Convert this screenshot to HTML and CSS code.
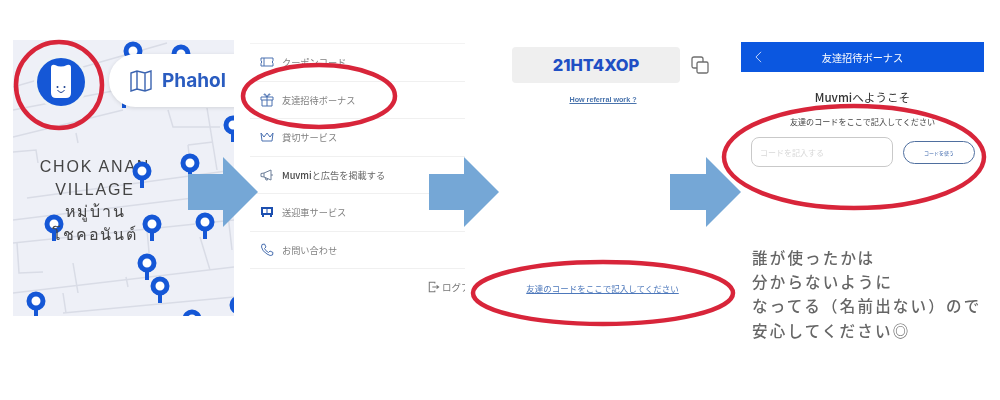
FILE: index.html
```html
<!DOCTYPE html>
<html lang="ja">
<head>
    <meta charset="UTF-8">
    <title>友達招待ボーナス</title>
    <link rel="stylesheet" href="styles.css">
</head>
<body>
    <div class="stage">
        <!-- 地図 -->
        <div class="panel map-panel">
            <svg class="map-svg" viewBox="13 40 221 276" width="221" height="276">
                <defs>
                    <g id="pin">
                        <rect x="-2" y="5" width="4" height="12" fill="#1557d6"/>
                        <circle r="7" fill="#fff" stroke="#1557d6" stroke-width="5"/>
                    </g>
                </defs>
                <g class="road">
                    <path d="M13 87L167 43M13 110L118 90M13 137L123 110M27 198L234 170M13 220L234 193M13 243L234 220M13 293L234 267M63 313L234 297"/>
                    <path d="M207 108L217 170M200 237L210 270M147 230L150 263M17 243L19 273L43 272M73 263L78 293M63 293L66 313M126 277L128 287M228 215L232 250"/>
                    <path d="M188 145L213 142M188 145L190 163M168 110L173 127L220 127M76 133L78 143M13 152L36 150L38 163"/>
                </g>
                <use href="#pin" x="133" y="51"/>
                <use href="#pin" x="181" y="54"/>
                <use href="#pin" x="124" y="91"/>
                <use href="#pin" x="233" y="125"/>
                <use href="#pin" x="190" y="163"/>
                <use href="#pin" x="54" y="224"/>
                <use href="#pin" x="205" y="222"/>
                <use href="#pin" x="147" y="263"/>
                <use href="#pin" x="160" y="286"/>
                <use href="#pin" x="36" y="301"/>
                <use href="#pin" x="192" y="319"/>
                <use href="#pin" x="239" y="305"/>
            </svg>
            <div class="map-label">
                <div>CHOK ANAN</div>
                <div>VILLAGE</div>
                <div>หมู่บ้าน</div>
                <div>โชคอนันต์</div>
            </div>
            <svg class="map-svg" viewBox="13 40 221 276" width="221" height="276">
                <use href="#pin" x="142" y="171"/>
                <use href="#pin" x="152" y="224"/>
            </svg>
            <div class="logo-btn">
                <svg viewBox="0 0 50 50" width="50" height="50">
                    <circle cx="25" cy="25" r="24" fill="#1557d6"/>
                    <path d="M15 11Q15 7 19 8Q22 9.5 25 9.5Q28 9.5 31 8Q35 7 35 11L35 36Q35 41 30 41L20 41Q15 41 15 36Z" fill="#fff"/>
                    <circle cx="21.5" cy="30" r="1" fill="#1b3f8f"/>
                    <circle cx="28.5" cy="30" r="1" fill="#1b3f8f"/>
                    <path d="M21.5 33Q25 38 28.5 33" fill="none" stroke="#1b3f8f" stroke-width="1"/>
                </svg>
            </div>
            <div class="place-pill">
                <svg viewBox="0 0 24 24" width="24" height="24" fill="none" stroke="#3a63b0" stroke-width="1.4">
                    <path d="M2 4L8 2L16 4L22 2V20L16 22L8 20L2 22ZM8 2V20M16 4V22"/>
                </svg>
                <span class="place-name">Phahol</span>
                <span class="place-dot">·</span>
            </div>
        </div>

        <!-- メニュー -->
        <div class="panel menu-panel">
            <div class="menu-row">
                <svg class="menu-icon" viewBox="0 0 14 14"><path d="M1 3H13V5.5Q11.5 7 13 8.5V11H1V8.5Q2.5 7 1 5.5ZM4 3V11"/></svg>
                <span>クーポンコード</span>
            </div>
            <div class="menu-row">
                <svg class="menu-icon" viewBox="0 0 14 14"><path d="M1 4H13V7H1ZM2 7V13H12V7M7 4V13M7 4Q3 1 4 1Q5.5 0 7 4Q8.5 0 10 1Q11 1 7 4"/></svg>
                <span>友達招待ボーナス</span>
            </div>
            <div class="menu-row">
                <svg class="menu-icon" viewBox="0 0 14 14"><path d="M1 3L4 7L7 3L10 7L13 3L12 11H2Z"/></svg>
                <span>貸切サービス</span>
            </div>
            <div class="menu-row">
                <svg class="menu-icon grey" viewBox="0 0 14 14"><path d="M1 5.5V8.5L4 9V5ZM4 5L11 2V12L4 9M5 9.5L6 12H7.5L7 10M11 7H13"/></svg>
                <span class="dark-part"><b>Muvmi</b>と広告を掲載する</span>
            </div>
            <div class="menu-row">
                <svg class="menu-icon solid" viewBox="0 0 14 14"><path d="M1 2H13V10H12V12H10V10H4V12H2V10H1ZM3 4V8H6.5V4ZM7.5 4V8H11V4Z"/></svg>
                <span>送迎車サービス</span>
            </div>
            <div class="menu-row">
                <svg class="menu-icon" viewBox="0 0 14 14"><path d="M2 1.5L4.5 1L6 4L4.5 5.5Q5.5 8 8.5 9.5L10 8L13 9.5L12.5 12Q10.5 13.5 7 11Q2 8 1.5 4Z"/></svg>
                <span>お問い合わせ</span>
            </div>
            <div class="logout-row">
                <svg class="logout-icon" viewBox="0 0 14 14"><path d="M8 3V1.5H1.5V12.5H8V11M5 7H12M10 5L12.5 7L10 9"/></svg>
                <span>ログアウト</span>
            </div>
        </div>

        <!-- 招待コード -->
        <div class="panel code-panel">
            <div class="code-row">
                <div class="code-box">21HT4XOP</div>
                <svg class="copy-icon" viewBox="0 0 18 18"><rect x="6" y="6" width="11" height="11" rx="1.5"/><path d="M6 12H3Q1 12 1 10V3Q1 1 3 1H10Q12 1 12 3V6"/></svg>
            </div>
            <a class="how-link" href="#">How referral work ?</a>
            <a class="enter-link" href="#">友達のコードをここで記入してください</a>
        </div>

        <!-- コード入力 -->
        <div class="panel enter-panel">
            <div class="enter-header">
                <svg class="back-icon" viewBox="0 0 8 14"><path d="M7 1L1 7L7 13"/></svg>
                <span>友達招待ボーナス</span>
            </div>
            <div class="welcome"><b>Muvmi</b>へようこそ</div>
            <div class="enter-sub">友達のコードをここで記入してください</div>
            <div class="enter-form">
                <div class="code-input">コードを記入する</div>
                <div class="use-btn">コードを使う</div>
            </div>
        </div>

        <p class="note">誰が使ったかは<br>分からないように<br>なってる（名前出ない）ので<br>安心してください◎</p>

        <!-- 矢印と赤丸 -->
        <svg class="overlay" viewBox="0 0 1000 400" width="1000" height="400">
            <path class="arrow" d="M188 174H223V157L258 192L223 227V210H188Z"/>
            <path class="arrow" d="M429 174H464V157L499 192L464 227V210H429Z"/>
            <path class="arrow" d="M670 174H706V157L741 192L706 227V210H670Z"/>
            <ellipse class="ring" cx="59" cy="85" rx="43" ry="43"/>
            <ellipse class="ring" cx="319" cy="96" rx="76" ry="31"/>
            <ellipse class="ring" cx="603" cy="293" rx="130" ry="31"/>
            <ellipse class="ring" cx="854" cy="157" rx="130" ry="51"/>
        </svg>
    </div>
</body>
</html>
```

FILE: styles.css
```css
* {
    box-sizing: border-box;
}

body {
    margin: 0;
    background: #fff;
    font-family: "Noto Sans CJK JP", "Noto Sans", sans-serif;
    overflow: hidden;
}

.stage {
    position: relative;
    width: 1000px;
    height: 400px;
    overflow: hidden;
}

.panel {
    position: absolute;
    overflow: hidden;
    filter: blur(0.35px);
}

/* 地図 */
.map-panel {
    left: 13px;
    top: 40px;
    width: 221px;
    height: 276px;
    background: #eef0f7;
}

.map-svg {
    position: absolute;
    left: 0;
    top: 0;
}

.road path {
    fill: none;
    stroke: #d9dce6;
    stroke-width: 1.5;
}

.map-label {
    position: absolute;
    left: 0;
    top: 116px;
    width: 164px;
    text-align: center;
    font-family: "Liberation Sans", "Noto Sans", sans-serif;
    font-size: 16px;
    line-height: 22.5px;
    letter-spacing: 1.8px;
    color: #444;
}

.logo-btn {
    position: absolute;
    left: 21px;
    top: 15px;
    width: 54px;
    height: 54px;
    border-radius: 50%;
    background: #eef2f5;
    display: flex;
    align-items: center;
    justify-content: center;
}

.place-pill {
    position: absolute;
    left: 96px;
    top: 14px;
    width: 160px;
    height: 53px;
    padding-left: 20px;
    border-radius: 27px;
    background: #fff;
    box-shadow: 0 1px 4px rgba(0, 0, 0, 0.12);
    display: flex;
    align-items: center;
    gap: 9px;
}

.place-name {
    font-family: "Inter", "Liberation Sans", sans-serif;
    font-size: 19px;
    font-weight: 700;
    color: #2a5cc0;
}

.place-dot {
    margin-left: -3px;
    font-size: 14px;
    color: #2a5cc0;
}

/* メニュー */
.menu-panel {
    left: 250px;
    top: 43px;
    width: 215px;
    height: 260px;
    border-top: 1px solid #f3f3f3;
}

.menu-row {
    height: 37.5px;
    padding-left: 10px;
    border-bottom: 1px solid #f0f0f0;
    display: flex;
    align-items: center;
    gap: 8px;
    font-size: 9.2px;
    color: #808080;
}

.menu-row b {
    font-weight: 500;
    color: #444;
}

.dark-part {
    color: #666;
}

.menu-icon {
    width: 14px;
    height: 14px;
    fill: none;
    stroke: #4a70b0;
    stroke-width: 1;
}

.menu-icon.grey {
    stroke: #6d7f99;
}

.menu-icon.solid {
    fill: #1c4fb0;
    fill-rule: evenodd;
    stroke: none;
}

.logout-row {
    margin-top: 11px;
    padding-left: 178px;
    display: flex;
    align-items: center;
    gap: 2px;
    font-size: 9.5px;
    color: #777;
    white-space: nowrap;
}

.logout-icon {
    flex: none;
    width: 12px;
    height: 12px;
    fill: none;
    stroke: #777;
    stroke-width: 1.2;
}

/* 招待コード */
.code-panel {
    left: 500px;
    top: 47px;
    width: 225px;
    height: 255px;
    padding-left: 12px;
}

.code-row {
    display: flex;
    align-items: center;
    gap: 11px;
}

.code-box {
    width: 168px;
    height: 36px;
    border-radius: 4px;
    background: #efefef;
    display: flex;
    align-items: center;
    justify-content: center;
    font-family: "Inter", "Liberation Sans", sans-serif;
    font-size: 16.5px;
    font-weight: 800;
    color: #1f4fc4;
}

.copy-icon {
    width: 18px;
    height: 18px;
    fill: none;
    stroke: #6f6f6f;
    stroke-width: 1.3;
}

.how-link {
    display: block;
    width: 182px;
    margin-top: 12px;
    text-align: center;
    font-family: "Liberation Sans", sans-serif;
    font-size: 7.2px;
    font-weight: 700;
    color: #4a74ad;
}

.enter-link {
    display: block;
    width: 181px;
    margin-top: 178px;
    text-align: center;
    font-size: 8.5px;
    color: #4d78bb;
}

/* コード入力 */
.enter-panel {
    left: 741px;
    top: 42px;
    width: 243px;
    height: 130px;
}

.enter-header {
    position: relative;
    height: 30px;
    background: #0b57e0;
    display: flex;
    align-items: center;
    justify-content: center;
    font-size: 10.2px;
    color: #fff;
}

.back-icon {
    position: absolute;
    left: 14px;
    top: 9px;
    width: 7px;
    height: 12px;
    fill: none;
    stroke: #dfe8fb;
    stroke-width: 1;
}

.welcome {
    margin-top: 16px;
    text-align: center;
    font-size: 11.6px;
    line-height: 18px;
    color: #333;
}

.welcome b {
    font-weight: 500;
}

.enter-sub {
    margin-top: 10px;
    text-align: center;
    font-size: 8.1px;
    line-height: 12px;
    color: #444;
}

.enter-form {
    margin-top: 9px;
    padding-left: 10px;
    display: flex;
    align-items: center;
    gap: 10px;
}

.code-input {
    width: 142px;
    height: 30px;
    padding-left: 8px;
    border: 1px solid #c9c9c9;
    border-radius: 8px;
    display: flex;
    align-items: center;
    font-size: 8px;
    color: #d8d8d8;
}

.use-btn {
    width: 72px;
    height: 23px;
    border: 1px solid #4f6f9f;
    border-radius: 12px;
    display: flex;
    align-items: center;
    justify-content: center;
    font-size: 5px;
    color: #3e68ad;
}

.note {
    position: absolute;
    left: 752px;
    top: 245px;
    margin: 0;
    font-size: 15.5px;
    font-weight: 500;
    line-height: 24.2px;
    letter-spacing: 2.2px;
    color: #666;
    white-space: nowrap;
    filter: blur(0.3px);
}

/* 矢印と赤丸 */
.overlay {
    position: absolute;
    left: 0;
    top: 0;
}

.arrow {
    fill: #75a7d6;
}

.ring {
    fill: none;
    stroke: #d8253a;
    stroke-width: 4.5;
}
```
